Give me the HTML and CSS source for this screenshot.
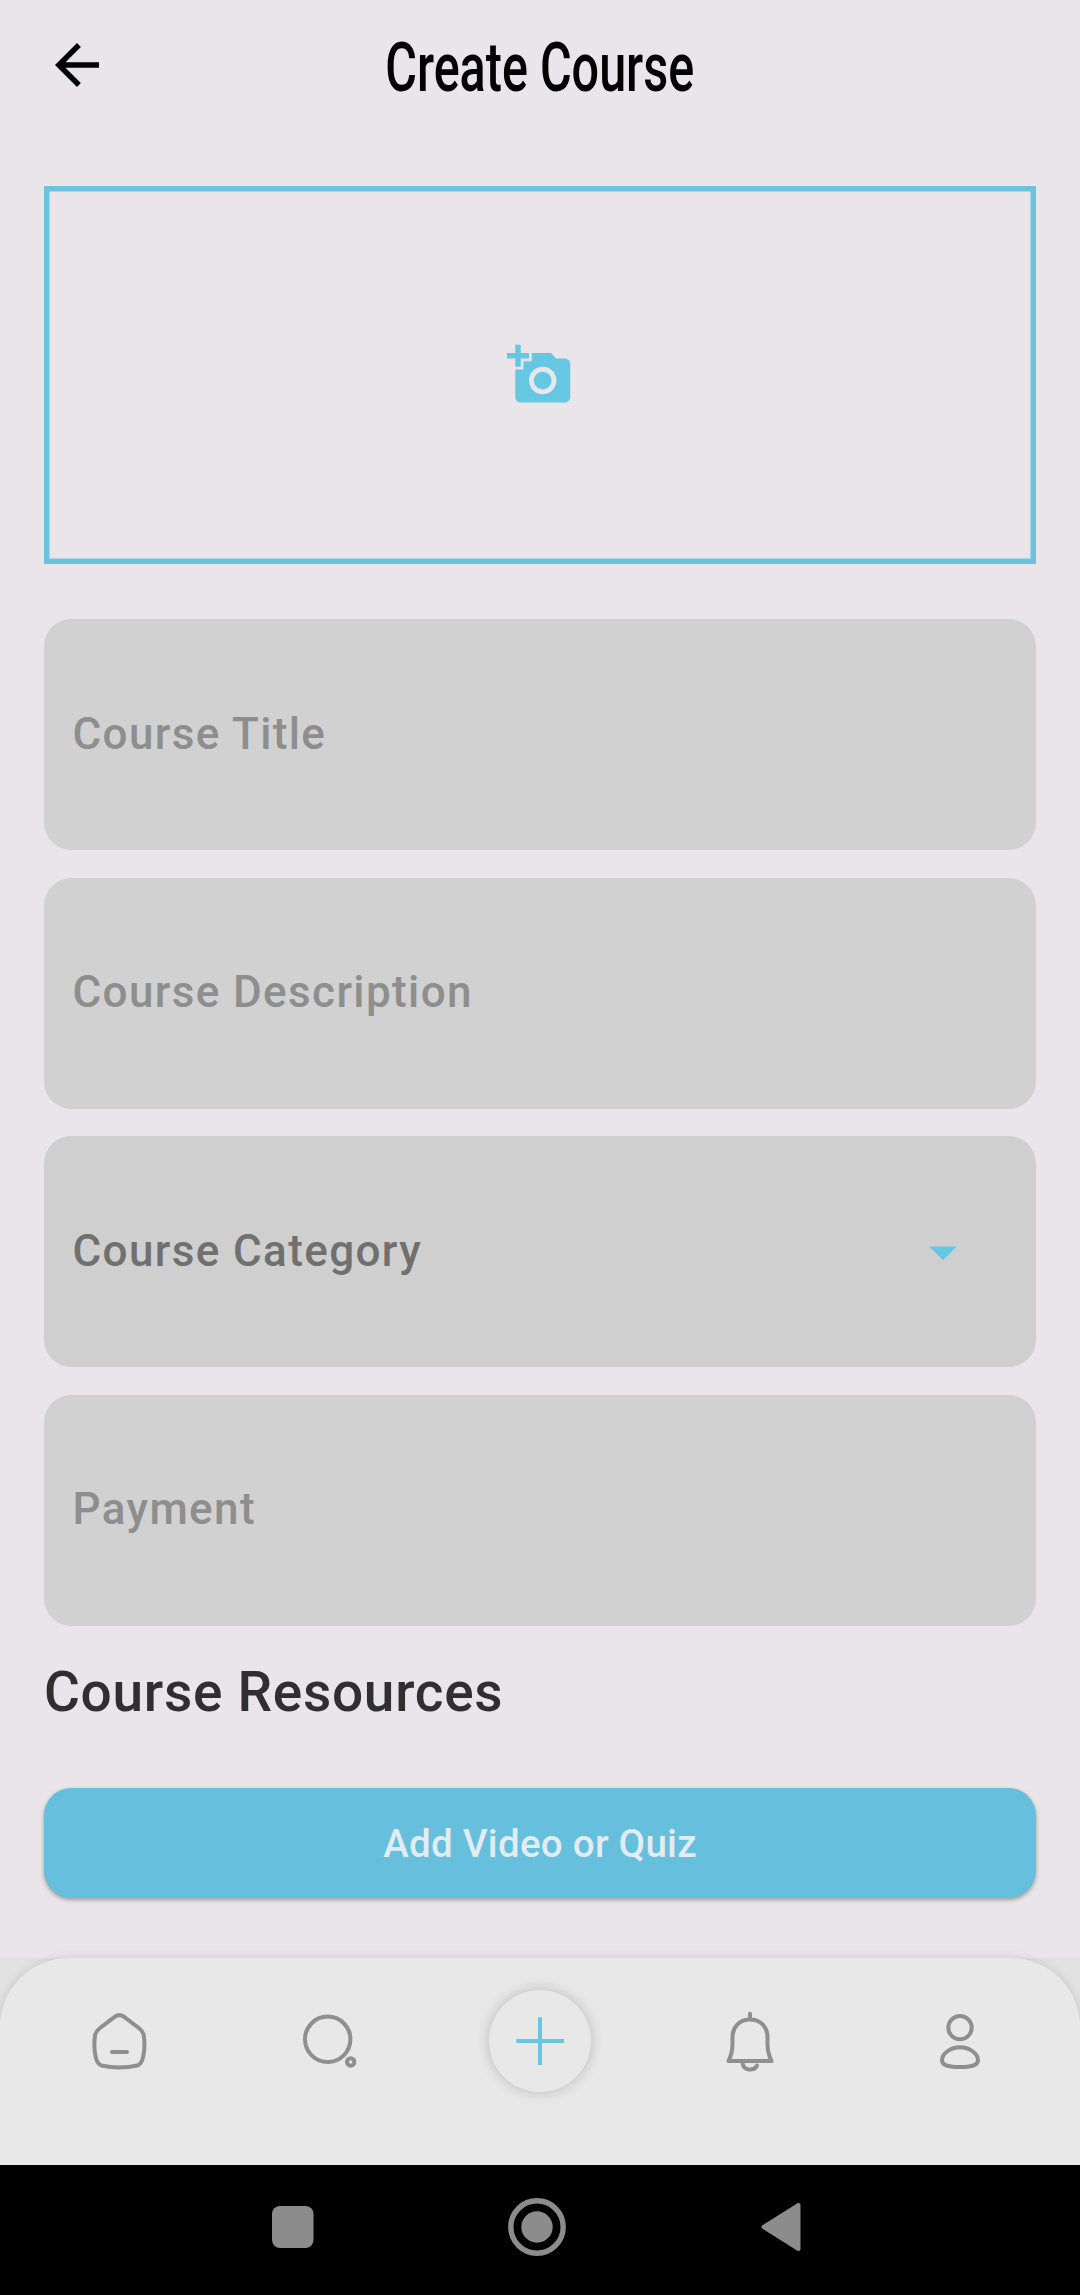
FILE: index.html
```html
<!DOCTYPE html>
<html lang="en">
<head>
<meta charset="utf-8">
<title>Create Course</title>
<link rel="stylesheet" href="styles.css">
</head>
<body>
<div class="screen">
  <header class="app-bar">
    <svg class="icon back" viewBox="0 0 24 24"><path d="M20 11H7.83l5.59-5.59L12 4l-8 8 8 8 1.41-1.41L7.83 13H20v-2z"/></svg>
    <h1 class="app-title"><span class="app-title-text">Create Course</span></h1>
  </header>
  <main class="form">
    <div class="photo-picker">
      <svg class="icon accent" viewBox="0 0 24 24"><path d="M3 4V1h2v3h3v2H5v3H3V6H0V4h3zm3 6V7h3V4h7l1.83 2H21c1.1 0 2 .9 2 2v12c0 1.1-.9 2-2 2H5c-1.1 0-2-.9-2-2V10h3zm7 9c2.76 0 5-2.24 5-5s-2.24-5-5-5-5 2.24-5 5 2.24 5 5 5zm-3.2-5c0 1.77 1.43 3.2 3.2 3.2s3.2-1.43 3.2-3.2-1.43-3.2-3.2-3.2-3.2 1.43-3.2 3.2z"/></svg>
    </div>
    <div class="fields">
      <div class="field"><span class="label">Course Title</span></div>
      <div class="field"><span class="label">Course Description</span></div>
      <div class="field select">
        <span class="label">Course Category</span>
        <svg class="icon accent" viewBox="0 0 24 24"><path d="M7 10l5 5 5-5z"/></svg>
      </div>
      <div class="field"><span class="label">Payment</span></div>
    </div>
    <h2 class="section-title">Course Resources</h2>
    <button class="add-button" type="button">Add Video or Quiz</button>
  </main>
  <div class="nav-backdrop">
    <nav class="nav">
      <svg class="nav-icon" viewBox="0 0 66 66"><path d="M28 8.6 13 20Q8.6 23.5 8 27.5 6.4 39 8.6 48.5 10 56 14.5 57.5 23 59.4 32.4 59.4T50.3 57.5Q54.8 56 56.2 48.5 58.4 39 56.8 27.5 56.2 23.5 51.8 20L36.8 8.6Q32.4 5.6 28 8.6ZM25 44H40"/></svg>
      <svg class="nav-icon" viewBox="0 0 66 66"><circle cx="30.7" cy="31.3" r="22.7"/><circle cx="53.7" cy="54" r="3.7"/></svg>
      <div class="nav-add">
        <svg class="nav-icon plus" viewBox="0 0 66 66"><path d="M33 9.3V57M9.2 33H57"/></svg>
      </div>
      <svg class="nav-icon" viewBox="0 0 66 66"><path d="M33 5.8V11M11.5 53Q15.5 45 15.5 36V29C15.5 18.5 23 11.6 33 11.6S50.5 18.5 50.5 29V36Q50.5 45 54.5 53ZM25.5 55C26.5 63 37 63.5 40 57.5"/></svg>
      <svg class="nav-icon" viewBox="0 0 66 66"><circle cx="33" cy="19.6" r="11.7"/><path d="M33 39.3C42.5 39.3 51 45.5 51 52.3 51 58 43 59 33 59S15 58 15 52.3C15 45.5 23.5 39.3 33 39.3Z"/></svg>
    </nav>
  </div>
  <footer class="system-bar">
    <svg class="system-icon" viewBox="0 0 60 60"><rect x="9" y="9" width="41.5" height="42" rx="8"/></svg>
    <svg class="system-icon" viewBox="0 0 60 60"><circle class="ring" cx="30" cy="30" r="26.2"/><circle cx="30" cy="30" r="15.7"/></svg>
    <svg class="system-icon" viewBox="0 0 60 60"><path class="rounded" d="M47.5 8 12.5 30 47.5 52Z"/></svg>
  </footer>
</div>
</body>
</html>
```
FILE: styles.css
```css
* {
  box-sizing: border-box;
}

body {
  margin: 0;
  background: #e9e5e8;
  font-family: Roboto, "Liberation Sans", sans-serif;
  font-weight: 500;
}

.screen {
  display: flex;
  flex-direction: column;
  width: 1080px;
  height: 2295px;
  overflow: hidden;
}

.icon {
  display: block;
  flex: none;
  width: 66px;
  height: 66px;
}

.accent {
  fill: #65c7e2;
}

.app-bar {
  display: grid;
  grid-template-columns: 66px 1fr 66px;
  align-items: center;
  height: 130px;
  padding: 0 44px;
}

.app-title {
  display: flex;
  justify-content: center;
  margin: 0;
  padding-top: 5px;
  font-size: 69px;
  font-weight: 500;
  line-height: 80px;
  white-space: nowrap;
}

/* Condensed display heading */
.app-title-text {
  transform: scaleX(0.703);
}

.form {
  display: flex;
  flex-direction: column;
  height: 1828px;
  padding: 56px 44px 0;
}

.photo-picker {
  display: flex;
  align-items: center;
  justify-content: center;
  height: 378px;
  box-shadow: inset 0 0 0 5.5px #6cc5dc;
}

.fields {
  display: flex;
  flex-direction: column;
  gap: 27.5px;
  margin-top: 55px;
}

.field {
  display: flex;
  align-items: center;
  justify-content: space-between;
  height: 231px;
  padding: 0 60.5px 0 28.5px;
  border-radius: 27.5px;
  background: #d1d1d1;
  color: #8e8e8e;
  font-size: 44px;
  letter-spacing: 1.375px;
}

.label {
  padding-bottom: 2px;
}

.select {
  background: #cfcfcf;
  color: #707070;
}

.section-title {
  margin: 33px 0 0;
  color: #2f2f2f;
  font-size: 55px;
  font-weight: 500;
  line-height: 66px;
  letter-spacing: 0.7px;
}

.add-button {
  height: 110px;
  margin-top: 63px;
  padding: 2px 0 0;
  border: 0;
  border-radius: 27.5px;
  background: #65bfdd;
  box-shadow: 0 2px 4px rgba(0, 0, 0, 0.33);
  color: #e1edf2;
  font: inherit;
  font-size: 38.5px;
  letter-spacing: 0.275px;
}

.nav-backdrop {
  height: 207px;
  background: #e1e1e1;
}

.nav {
  display: grid;
  grid-template-columns: repeat(5, 1fr);
  align-items: center;
  justify-items: center;
  height: 207px;
  padding: 0 15px 42px;
  border-radius: 68.75px 68.75px 0 0;
  background: #e8e8e8;
  box-shadow: 0 0 10px rgba(0, 0, 0, 0.12);
}

.nav-icon {
  display: block;
  width: 66px;
  height: 66px;
  fill: none;
  stroke: #8f8f8f;
  stroke-width: 4;
  stroke-linecap: round;
  stroke-linejoin: round;
}

.nav-add {
  display: grid;
  place-items: center;
  width: 102px;
  height: 102px;
  border-radius: 50%;
  background: #e8e8e8;
  box-shadow: 0 0 14px rgba(0, 0, 0, 0.2);
}

.plus {
  stroke: #6ac6df;
  stroke-linecap: butt;
}

.system-bar {
  display: flex;
  justify-content: space-between;
  align-items: flex-start;
  height: 130px;
  padding: 32px 269px 0 263px;
  background: #000;
}

.system-icon {
  width: 60px;
  height: 60px;
  fill: #8c8c8c;
}

.ring {
  fill: none;
  stroke: #8c8c8c;
  stroke-width: 5.4;
}

.rounded {
  stroke: #8c8c8c;
  stroke-width: 4;
  stroke-linejoin: round;
}
```
